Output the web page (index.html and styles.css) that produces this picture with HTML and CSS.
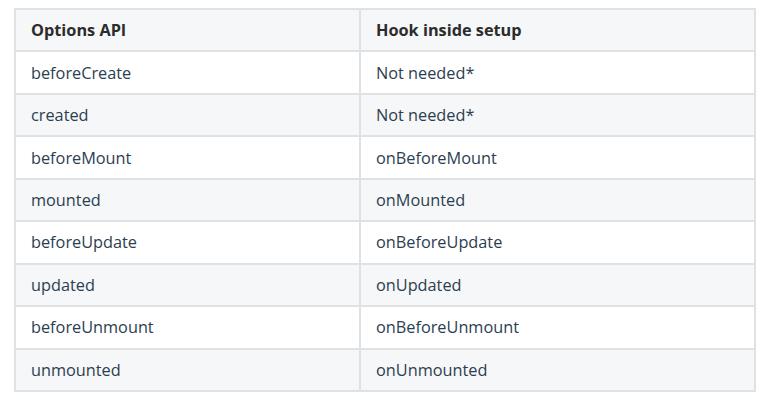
FILE: index.html
```html
<!DOCTYPE html>
<html lang="en">
<head>
    <meta charset="UTF-8">
    <meta name="viewport" content="width=device-width, initial-scale=1.0">
    <title>Lifecycle Hooks</title>
    <link rel="stylesheet" href="styles.css">
</head>
<body>
    <table class="hooks-table">
        <thead>
            <tr>
                <th>Options API</th>
                <th>Hook inside setup</th>
            </tr>
        </thead>
        <tbody>
            <tr><td>beforeCreate</td><td>Not needed*</td></tr>
            <tr><td>created</td><td>Not needed*</td></tr>
            <tr><td>beforeMount</td><td>onBeforeMount</td></tr>
            <tr><td>mounted</td><td>onMounted</td></tr>
            <tr><td>beforeUpdate</td><td>onBeforeUpdate</td></tr>
            <tr><td>updated</td><td>onUpdated</td></tr>
            <tr><td>beforeUnmount</td><td>onBeforeUnmount</td></tr>
            <tr><td>unmounted</td><td>onUnmounted</td></tr>
        </tbody>
    </table>
</body>
</html>
```

FILE: styles.css
```css
:root {
    --border-color: #dfe2e5;
    --stripe-color: #f6f7f8;
    --text-color: #2c3e50;
}

body {
    margin: 0;
    padding: 8px 0 0 14px;
    background: #fff;
    color: var(--text-color);
    font-family: 'Open Sans', sans-serif;
    font-size: 16.3px;
}

.hooks-table {
    border-collapse: collapse;
    width: 742px;
    table-layout: fixed;
}

.hooks-table th,
.hooks-table td {
    border: 2px solid var(--border-color);
    padding: 0 15px;
    height: 42.44px;
    box-sizing: border-box;
    text-align: left;
    vertical-align: middle;
    line-height: 20px;
}

.hooks-table th {
    font-weight: 700;
    color: #2c2c2c;
}

.hooks-table th:first-child,
.hooks-table td:first-child {
    width: 345px;
}

.hooks-table thead tr,
.hooks-table tbody tr:nth-child(2n) {
    background: var(--stripe-color);
}
```
